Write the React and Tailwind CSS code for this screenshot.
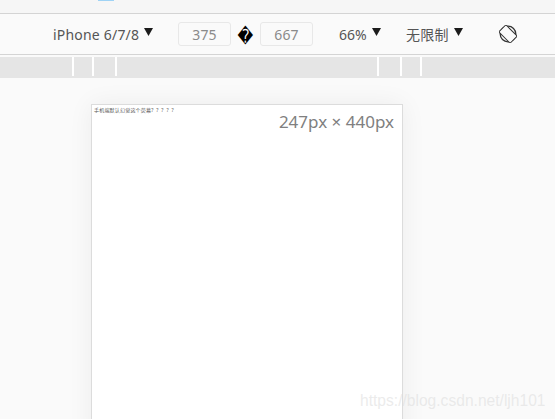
import React from "react"

const font = { fontFamily: '"Noto Sans", "Noto Sans CJK SC", sans-serif' }

function Caret() {
  return (
    <svg width="9" height="8" viewBox="0 0 9 8" className="ml-[5px] mb-[4px] shrink-0">
      <path d="M0 0H9L4.5 8Z" fill="#1c1c1c" />
    </svg>
  )
}

function RotateIcon() {
  return (
    <svg width="18" height="18" viewBox="0 0 18 18" fill="none" stroke="#333" strokeWidth="1">
      <circle cx="9" cy="9" r="7.8" strokeWidth="1.3" />
      <g transform="rotate(-45 9 9)">
        <rect x="4" y="1" width="10" height="16" rx="1" fill="#fafafa" />
      </g>
    </svg>
  )
}

function SizeInput({ value }) {
  return (
    <div className="w-[53px] h-[24px] rounded-[3px] border border-[#e8e8e8] bg-[#fafafa] flex items-center justify-center text-[14px] text-[#8a8a8a] tracking-[0.2px]">
      {value}
    </div>
  )
}

function Tick() {
  return <div className="w-[2px] h-[19px] bg-white shrink-0" />
}

export default function App() {
  return (
    <div className="relative h-[419px] w-[555px] overflow-hidden bg-[#fafafa]" style={font}>
      {/* top strip */}
      <div className="h-[14px] bg-[#f6f6f6] border-b border-[#d4d4d4] pl-[98px]">
        <div className="w-[16px] h-[1px] bg-[#9fd3f5]" />
      </div>

      {/* device toolbar */}
      <div className="h-[41px] bg-[#fafafa] border-b border-[#d4d4d4] flex items-center text-[14px] text-[#555]">
        <div className="ml-[53px] flex items-center w-[125px] tracking-[0.2px]">
          iPhone 6/7/8
          <Caret />
        </div>
        <SizeInput value="375" />
        <div className="w-[29px] flex justify-center text-[18px] leading-none text-black pt-[5px]" style={{ fontFamily: '"DejaVu Sans", sans-serif' }}>
          <span className="inline-block scale-x-[0.85] scale-y-[1.05]">�</span>
        </div>
        <SizeInput value="667" />
        <div className="ml-[26px] flex items-center w-[67px]">
          66%
          <Caret />
        </div>
        <div className="flex items-center w-[93px] tracking-[0.3px]">
          无限制
          <Caret />
        </div>
        <RotateIcon />
      </div>

      {/* ruler */}
      <div className="mt-[2px] h-[21px] bg-[#e5e5e5] flex pl-[72px]">
        <Tick />
        <div className="w-[18px]" />
        <Tick />
        <div className="w-[21px]" />
        <Tick />
        <div className="w-[260px]" />
        <Tick />
        <div className="w-[21px]" />
        <Tick />
        <div className="w-[18px]" />
        <Tick />
      </div>

      {/* device frame */}
      <div className="pt-[26px] pl-[91px]">
        <div className="relative w-[312px] h-[340px] bg-white border border-[#dcdcdc] shadow-[0_0_24px_rgba(0,0,0,0.06)]">
          <p className="pl-[2px] pt-[2px] text-[5px] leading-[7px] text-[#555] tracking-[0.2px] [word-spacing:1.2px]">手机端默认幻觉这个荧幕? ? ? ? ?</p>
          <div className="absolute top-[5px] right-[8px] text-[17px] leading-[23px] text-[#808080]">247px × 440px</div>
        </div>
      </div>

      {/* watermark */}
      <div className="absolute left-[360px] top-[391px] text-[15.6px] leading-[20px] text-[#dedede]/60" style={{ fontFamily: '"Liberation Sans", sans-serif' }}>
        https://blog.csdn.net/ljh101
      </div>
    </div>
  )
}
